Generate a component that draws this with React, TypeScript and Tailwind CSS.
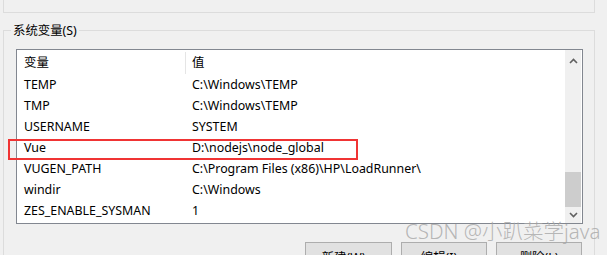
import React from 'react'

const rows: [string, string][] = [
  ['TEMP', 'C:\\Windows\\TEMP'],
  ['TMP', 'C:\\Windows\\TEMP'],
  ['USERNAME', 'SYSTEM'],
  ['Vue', 'D:\\nodejs\\node_global'],
  ['VUGEN_PATH', 'C:\\Program Files (x86)\\HP\\LoadRunner\\'],
  ['windir', 'C:\\Windows'],
  ['ZES_ENABLE_SYSMAN', '1'],
]

const font = { fontFamily: '"Noto Sans", "Noto Sans CJK SC", sans-serif' }

const App: React.FC = () => {
  return (
    <div
      className="relative w-[607px] h-[255px] overflow-hidden bg-[#f0f0f0] text-[12.4px] text-black"
      style={font}
    >
      {/* User variables panel (cut off at top) */}
      <div className="ml-[3px] w-[592px] h-[13px] border-x border-b border-[#dcdcdc]" />

      {/* System variables group */}
      <div className="relative mt-[17px] ml-[3px] w-[592px] h-[230px] border-x border-t border-[#dcdcdc]">
        <div className="absolute left-[7px] top-[-9px] px-[2px] bg-[#f0f0f0] leading-[18px]">系统变量(S)</div>

        <div className="ml-[12px] mt-[18px] w-[567px] h-[175px] border border-[#828790] bg-white flex">
          <div className="flex-1 flex flex-col">
            {/* Header */}
            <div className="flex h-[24px] items-center pt-[2px]">
              <div className="w-[168px] pl-[7px]">变量</div>
              <div className="w-px h-[22px] bg-[#e5e5e5]" />
              <div className="pl-[6px]">值</div>
            </div>
            {rows.map(([name, value]) => (
              <div key={name} className="flex h-[21px] items-center pt-[2px]">
                <div className="w-[169px] pl-[7px] whitespace-nowrap">{name}</div>
                <div className="pl-[6px] whitespace-nowrap">{value}</div>
              </div>
            ))}
          </div>

          {/* Scrollbar */}
          <div className="w-[16px] mr-px bg-[#f0f0f0] flex flex-col items-center">
            <div className="h-[22px] flex items-center justify-center">
              <svg width="9" height="6" viewBox="0 0 9 6">
                <path d="M1 5 L4.5 1.5 L8 5" stroke="#606060" strokeWidth="1.6" fill="none" />
              </svg>
            </div>
            <div className="flex-1" />
            <div className="w-full h-[35px] bg-[#cdcdcd]" />
            <div className="h-[16px] flex items-center justify-center">
              <svg width="9" height="6" viewBox="0 0 9 6">
                <path d="M1 1 L4.5 4.5 L8 1" stroke="#606060" strokeWidth="1.6" fill="none" />
              </svg>
            </div>
          </div>
        </div>

        {/* Buttons */}
        <div className="flex justify-end gap-[9px] mt-[18px] mr-[12px]">
          <button className="w-[87px] h-[23px] bg-[#e1e1e1] border border-[#adadad] pt-[6px] leading-[18px]">新建(W)...</button>
          <button className="w-[86px] h-[23px] bg-[#e1e1e1] border border-[#adadad] pt-[6px] leading-[18px]">编辑(I)...</button>
          <button className="w-[86px] h-[23px] bg-[#e1e1e1] border border-[#adadad] pt-[6px] leading-[18px]">删除(L)</button>
        </div>
      </div>

      {/* Highlight box */}
      <div className="absolute left-[8px] top-[139px] w-[350px] h-[21px] border-2 border-[#f03434]" />

      {/* Watermark */}
      <div className="absolute left-[405px] top-[218px] text-[20.5px] leading-[26px] font-light text-[#a6a6a6]/80 whitespace-nowrap">
        CSDN @小趴菜学java
      </div>
    </div>
  )
}

export default App
